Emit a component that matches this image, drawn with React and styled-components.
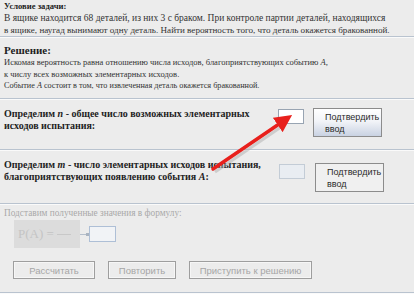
import React from 'react';
import styled, { createGlobalStyle } from 'styled-components';

const Global = createGlobalStyle`
  html, body {
    margin: 0;
    padding: 0;
    background: #ececec;
  }
`;

const serif = `"Liberation Serif", "Times New Roman", Times, serif`;
const sans = `"Liberation Sans", Arial, sans-serif`;

const Page = styled.div`
  position: relative;
  width: 414px;
  height: 294px;
  overflow: hidden;
  display: flex;
  flex-direction: column;
  background: #ececec;
  font-family: ${serif};
  font-size: 11px;
  color: #2a2a2a;
`;

const Section = styled.div`
  padding: ${p => p.$pad || '0 4px'};
  height: ${p => p.$h}px;
  box-sizing: border-box;
`;

const Line = styled.div`
  font-family: ${serif};
  font-size: ${p => p.$size || 9.6}px;
  line-height: 12px;
  white-space: nowrap;
  color: ${p => (p.$faded ? '#a9a9a9' : '#333')};
`;

const Title = styled.div`
  font-family: ${serif};
  font-size: ${p => p.$size || 11}px;
  line-height: 12px;
  font-weight: bold;
  color: #1e1e1e;
`;

const Divider = styled.div`
  height: 1px;
  background: #b9c3cf;
  border-bottom: 1px solid #fafafa;
  flex-shrink: 0;
`;

const StepRow = styled.div`
  display: flex;
  align-items: flex-start;
  padding: ${p => p.$pad};
  height: ${p => p.$h}px;
  box-sizing: border-box;
`;

const StepText = styled.div`
  width: 274px;
  font-family: ${serif};
  font-size: 10px;
  font-weight: bold;
  color: #1e1e1e;
  line-height: 12px;
  white-space: nowrap;
`;

const Field = styled.div`
  width: 26px;
  height: 15px;
  margin-top: ${p => p.$mt}px;
  margin-left: ${p => p.$ml}px;
  box-sizing: border-box;
  background: ${p => (p.$off ? '#e9edf2' : '#ffffff')};
  border: 1px solid ${p => (p.$off ? '#c3ccd6' : '#98a4b2')};
`;

const ConfirmButton = styled.div`
  width: 69px;
  height: 29px;
  margin-left: ${p => p.$ml}px;
  margin-top: ${p => p.$mt || 0}px;
  box-sizing: border-box;
  border: 1px solid #8c8c8c;
  background: ${p =>
    p.$off
      ? '#f0f0f0'
      : 'linear-gradient(#ffffff 0%, #f2f4f8 45%, #c9d2e2 100%)'};
  font-family: ${sans};
  font-size: 9px;
  line-height: 12px;
  color: #2b2b2b;
  padding: 2px 0 0 11px;
`;

const Formula = styled.div`
  display: flex;
  align-items: center;
  margin: 0 0 0 10px;
  height: 30px;
`;

const FormulaPic = styled.div`
  width: 66px;
  height: 28px;
  background: #dcdcdc;
  color: #c4c4c4;
  font-family: ${serif};
  font-size: 13px;
  display: flex;
  align-items: center;
  padding-left: 4px;
  box-sizing: border-box;
  gap: 3px;
`;

const Frac = styled.span`
  display: inline-block;
  width: 14px;
  height: 1px;
  background: #c8c8c8;
`;

const Connector = styled.div`
  width: 7px;
  height: 1px;
  background: #b5bfcc;
  position: relative;
  &::after {
    content: '';
    position: absolute;
    right: -2px;
    top: -1px;
    width: 3px;
    height: 3px;
    background: #aab4c0;
  }
`;

const FormulaField = styled.div`
  width: 27px;
  height: 16px;
  margin-left: 2px;
  border: 1px solid #aebfd6;
  background: #f1f3f6;
  box-sizing: border-box;
`;

const ActionRow = styled.div`
  display: flex;
  gap: 13px;
  padding: 0 0 0 13px;
  margin-top: 12px;
  height: 31px;
`;

const ActionButton = styled.div`
  width: ${p => p.$w}px;
  height: 18px;
  box-sizing: border-box;
  border: 1px solid #9e9e9e;
  box-shadow: inset 0 0 0 1px #f6f6f6;
  font-family: ${sans};
  font-size: 9.5px;
  color: #a6a6a6;
  display: flex;
  align-items: center;
  justify-content: center;
`;

const ArrowLayer = styled.svg`
  position: absolute;
  left: 0;
  top: 0;
  pointer-events: none;
`;

export default function App() {
  return (
    <Page>
      <Global />
      <Section $h={36} $pad="0 4px">
        <Title $size={8.6}>Условие задачи:</Title>
        <Line $size={9.5}>В ящике находится 68 деталей, из них 3 с браком. При контроле партии деталей, находящихся</Line>
        <Line $size={9.1}>в ящике, наугад вынимают одну деталь. Найти вероятность того, что деталь окажется бракованной.</Line>
      </Section>
      <Divider />
      <Section $h={60} $pad="6px 4px 0">
        <Title>Решение:</Title>
        <Line $size={8.5}>Искомая вероятность равна отношению числа исходов, благоприятствующих событию <i>A</i>,</Line>
        <Line $size={8.5}>к числу всех возможных элементарных исходов.</Line>
        <Line $size={8.2}>Событие <i>A</i> состоит в том, что извлеченная деталь окажется бракованной.</Line>
      </Section>
      <Divider />
      <StepRow $h={49} $pad="8px 0 0 4px">
        <StepText>
          Определим <i>n</i> - общее число возможных элементарных
          <br />
          исходов испытания:
        </StepText>
        <Field $mt={1} $ml={0} />
        <ConfirmButton $ml={9}>Подтвердить<br />ввод</ConfirmButton>
      </StepRow>
      <Divider />
      <StepRow $h={52} $pad="8px 0 0 4px">
        <StepText>
          Определим <i>m</i> - число элементарных исходов испытания,
          <br />
          благоприятствующих появлению события <i>A</i>:
        </StepText>
        <Field $off $mt={5} $ml={1} />
        <ConfirmButton $off $ml={10} $mt={4}>Подтвердить<br />ввод</ConfirmButton>
      </StepRow>
      <Divider />
      <Section $h={44} $pad="2px 4px 0">
        <Line $faded $size={9.3}>Подставим полученные значения в формулу:</Line>
        <Formula>
          <FormulaPic>
            <span>P(A) =</span>
            <Frac />
          </FormulaPic>
          <Connector />
          <FormulaField />
        </Formula>
      </Section>
      <ActionRow>
        <ActionButton $w={82}>Рассчитать</ActionButton>
        <ActionButton $w={68}>Повторить</ActionButton>
        <ActionButton $w={123}>Приступить к решению</ActionButton>
      </ActionRow>
      <Divider />
      <ArrowLayer width="414" height="294" viewBox="0 0 414 294">
        <defs>
          <marker id="head" markerWidth="5" markerHeight="5" refX="1.5" refY="2.5" orient="auto">
            <path d="M0,0 L5,2.5 L0,5 Z" fill="#e8201c" />
          </marker>
        </defs>
        <line x1="214" y1="170" x2="283" y2="123" stroke="#b0b0b0" strokeWidth="3" opacity="0.5" transform="translate(1,2)" />
        <line x1="213" y1="169" x2="282" y2="122" stroke="#e8201c" strokeWidth="3.5" strokeLinecap="round" markerEnd="url(#head)" />
      </ArrowLayer>
    </Page>
  );
}
